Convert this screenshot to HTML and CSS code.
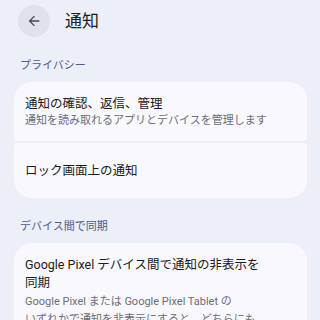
FILE: index.html
```html
<!DOCTYPE html>
<html>
    <head>
        <meta charset="utf-8">
        <link rel="stylesheet" href="styles.css">
    </head>
    <body>
        <div class="header">
            <div class="back">
                <svg viewBox="0 0 24 24" width="16" height="16"><path d="M20 11H7.83l5.59-5.59L12 4l-8 8 8 8 1.41-1.41L7.83 13H20v-2z" fill="#44474f"/></svg>
            </div>
            <div class="title">通知</div>
        </div>

        <div class="label">プライバシー</div>
        <div class="card first">
            <div class="item-title">通知の確認、返信、管理</div>
            <div class="item-sub">通知を読み取れるアプリとデバイスを管理します</div>
        </div>
        <div class="card last single">
            <div class="item-title">ロック画面上の通知</div>
        </div>

        <div class="label">デバイス間で同期</div>
        <div class="card first">
            <div class="item-title">Google Pixel デバイス間で通知の非表示を<br>同期</div>
            <div class="item-sub tall">Google Pixel または Google Pixel Tablet の<br>いずれかで通知を非表示にすると、どちらにも</div>
        </div>
    </body>
</html>
```

FILE: styles.css
```css
body {
    margin: 0;
    background: #eceef8;
    font-family: Roboto, "Noto Sans CJK JP", sans-serif;
    color: #1b1b21;
    height: 320px;
    overflow: hidden;
}
.header {
    display: flex;
    align-items: center;
    padding: 5px 0 0 18px;
}
.back {
    width: 32px;
    height: 32px;
    border-radius: 50%;
    background: #dfe1eb;
    display: flex;
    align-items: center;
    justify-content: center;
}
.title {
    margin-left: 15px;
    font-size: 17px;
    line-height: 24px;
}
.label {
    margin: 21px 0 8px 20px;
    font-size: 11px;
    line-height: 16px;
    color: #4d5b8c;
}
.card {
    margin: 0 13px 2px 14px;
    background: #f8f8fd;
    border-radius: 4px;
    padding: 13px 11px 12px;
}
.card.first {
    border-radius: 18px 18px 4px 4px;
}
.card.last {
    border-radius: 4px 4px 18px 18px;
}
.card.single {
    padding: 19px 11px 18px;
}
.item-title {
    font-size: 12.5px;
    line-height: 18px;
}
.item-sub {
    font-size: 11px;
    line-height: 16px;
    color: #6b6d78;
}
.item-sub.tall {
    margin-top: 1px;
    line-height: 18px;
}
```
